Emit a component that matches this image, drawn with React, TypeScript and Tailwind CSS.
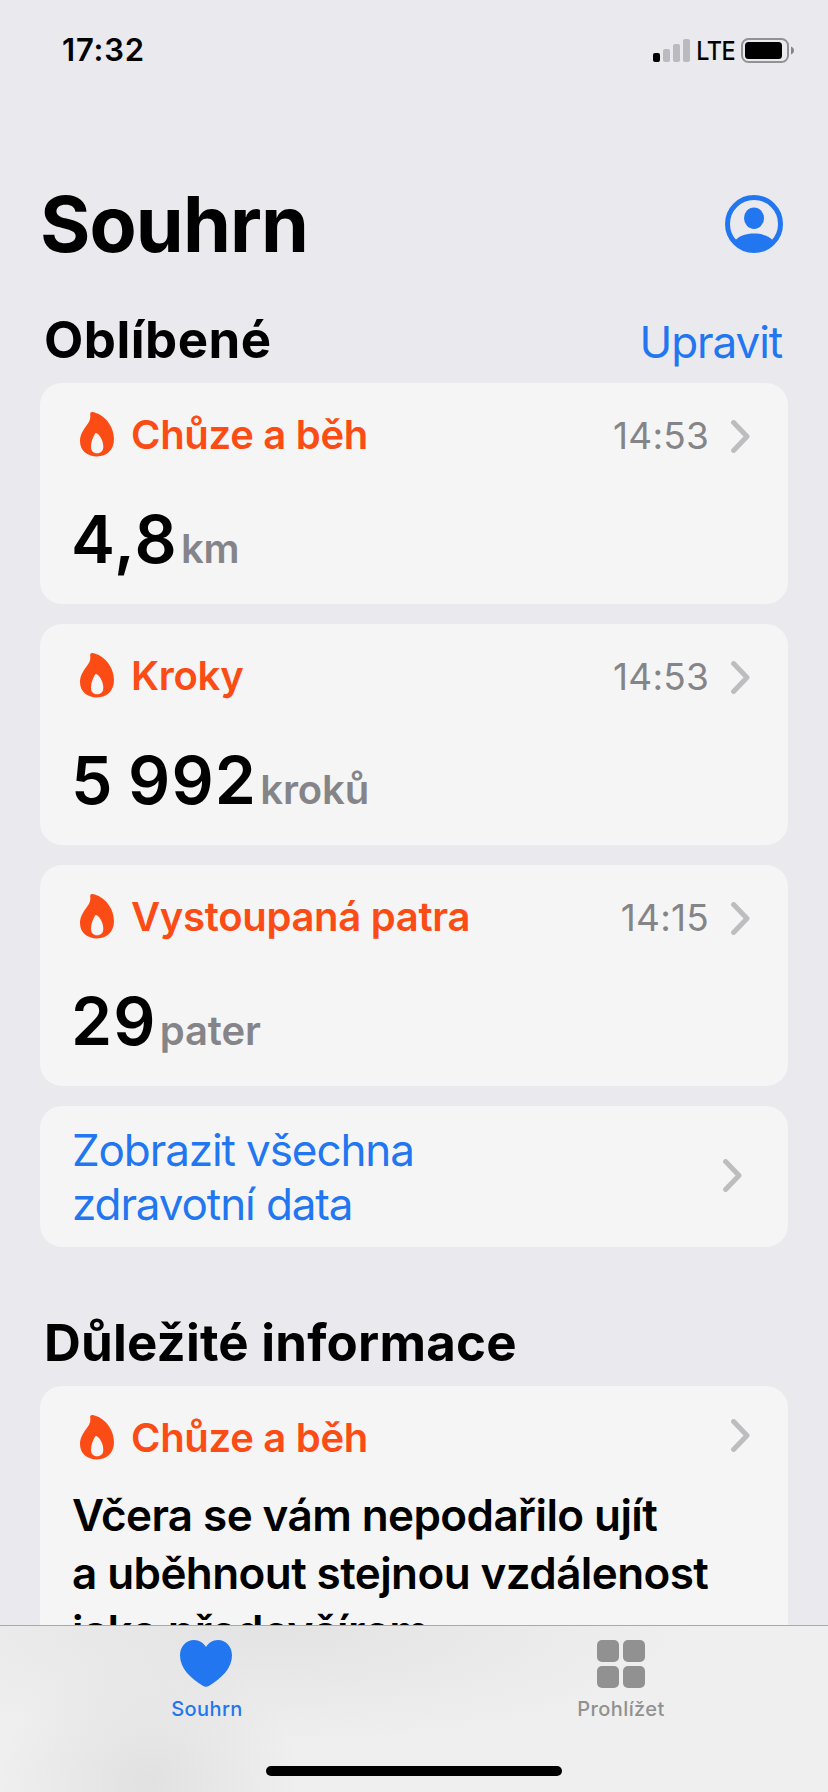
interface Metric {
  title: string;
  time: string;
  value: string;
  unit: string;
}

const METRICS: Metric[] = [
  { title: 'Chůze a běh', time: '14:53', value: '4,8', unit: 'km' },
  { title: 'Kroky', time: '14:53', value: '5 992', unit: 'kroků' },
  { title: 'Vystoupaná patra', time: '14:15', value: '29', unit: 'pater' },
];

function FlameIcon() {
  return (
    <svg width="34" height="45" viewBox="0 0 34 45" className="shrink-0">
      <path
        fill="#fc4c16"
        fillRule="evenodd"
        d="M12.5 .1C24 2 34 14 34 27c0 11-7 17.4-17 17.4S0 38.5 0 29c0-6 3-10.5 6-14.7 3-4.2 4.9-6.6 4.2-11.8C10 .8 11-.1 12.5 .1ZM16 21c-.5-.1-.8.2-1.2 1C13 25.5 11 29.500 11 34.500c0 4.500 2.300 6.800 6 6.800 4 0 6.300-2.300 6.300-6.800 0-5.500-3.300-11-6-13C16.800 21.200 16.500 21 16 21Z"
      />
    </svg>
  );
}

function ChevronIcon({ className = '' }: { className?: string }) {
  return (
    <svg width="19" height="33" viewBox="0 0 19 33" className={`shrink-0 ${className}`}>
      <path
        d="M2.6 2.6 16 16.5 2.6 30.4"
        fill="none"
        stroke="#bdbdbf"
        strokeWidth="5"
        strokeLinecap="round"
        strokeLinejoin="round"
      />
    </svg>
  );
}

function AvatarIcon() {
  return (
    <svg width="58" height="58" viewBox="0 0 58 58">
      <circle cx="29" cy="29" r="26.5" fill="none" stroke="#2277f0" strokeWidth="5" />
      <ellipse cx="29" cy="23.2" rx="10" ry="10.8" fill="#2277f0" />
      <path d="M10 45.5C14 41 21 38.5 29 38.5S44 41 48 45.5A26 26 0 0 1 10 45.5Z" fill="#2277f0" />
    </svg>
  );
}

function StatusBar() {
  return (
    <div className="h-[100px] shrink-0 flex items-center justify-between pl-[62px] pr-[34px]">
      <span className="text-[31px] font-semibold tracking-[0.8px]">17:32</span>
      <div className="flex items-center">
        <svg width="37" height="23" viewBox="0 0 37 23">
          <rect x="0" y="14" width="7" height="9" rx="2" fill="#000" />
          <rect x="10" y="10" width="7" height="13" rx="2" fill="#bbbabf" />
          <rect x="20" y="5" width="7" height="18" rx="2" fill="#bbbabf" />
          <rect x="30" y="0" width="7" height="23" rx="2" fill="#bbbabf" />
        </svg>
        <span className="w-[51px] flex justify-center text-[26px] font-medium tracking-[-0.5px]">
          <span className="scale-x-[0.9]">LTE</span>
        </span>
        <svg width="53" height="25" viewBox="0 0 53 25">
          <rect x="1" y="1" width="46" height="23" rx="6.5" fill="none" stroke="#919196" strokeWidth="2" />
          <rect x="4" y="4" width="37" height="17" rx="3.5" fill="#000" />
          <path d="M50 8.500c1.800.7 3 2.200 3 4s-1.200 3.300-3 4Z" fill="#86868a" />
        </svg>
      </div>
    </div>
  );
}

function MetricCard({ title, time, value, unit }: Metric) {
  return (
    <div className="h-[221px] rounded-[22px] bg-[#f5f5f5] pl-8 pr-[38px] pt-[29px]">
      <div className="h-[45px] flex items-center">
        <div className="pl-2">
          <FlameIcon />
        </div>
        <span className="ml-[17px] flex-1 text-[40px] leading-none font-semibold tracking-[-0.3px] text-[#fc4c16]">
          {title}
        </span>
        <span className="mt-[2px] mr-[22px] text-[37px] leading-none tracking-[0.2px] text-[#858589]">{time}</span>
        <ChevronIcon className="mt-1" />
      </div>
      <div className="mt-[42px] -ml-px flex items-baseline gap-[3px] leading-[80px]">
        <span className="text-[66px] font-semibold tracking-[1.2px] [word-spacing:-3.5px]">{value}</span>
        <span className="text-[40px] font-semibold tracking-[-0.1px] text-[#858589]">{unit}</span>
      </div>
    </div>
  );
}

function TabBar() {
  return (
    <nav className="h-[167px] shrink-0 border-t border-[#a9a9ac] bg-[#efefef] bg-[radial-gradient(ellipse_150px_130px_at_150px_155px,#e1e1e1,transparent),radial-gradient(ellipse_420px_120px_at_270px_0px,#e3e3e3,transparent)]">
      <div className="flex pt-[14px] text-[20px] leading-6 font-medium tracking-[0.4px]">
        <div className="flex-1 flex flex-col items-center text-[#2277f0]">
          <svg width="52" height="48" viewBox="0 0 52 48" className="mr-[2px]">
            <path
              fill="currentColor"
              d="M26 7C28.5 3 32.5 0 38 0c8 0 14 6.5 14 15.5C52 28 41.5 38.5 28.8 46c-1.800 1-3.800 1-5.600 0C10.5 38.5 0 28 0 15.5 0 6.5 6 0 14 0c5.500 0 9.500 3 12 7Z"
            />
          </svg>
          <span className="mt-[9px]">Souhrn</span>
        </div>
        <div className="flex-1 flex flex-col items-center text-[#919191]">
          <div className="grid grid-cols-2 gap-1">
            <div className="size-[22px] rounded-[5px] bg-[#919191]" />
            <div className="size-[22px] rounded-[5px] bg-[#919191]" />
            <div className="size-[22px] rounded-[5px] bg-[#919191]" />
            <div className="size-[22px] rounded-[5px] bg-[#919191]" />
          </div>
          <span className="mt-[9px]">Prohlížet</span>
        </div>
      </div>
      <div className="mt-[45px] mx-auto w-[296px] h-[10px] rounded-full bg-black" />
    </nav>
  );
}

export default function App() {
  return (
    <div className="w-[828px] h-[1792px] overflow-hidden flex flex-col bg-[#eae9ee] text-black font-['Inter','Liberation_Sans',sans-serif]">
      <StatusBar />

      <main className="flex-1 min-h-0 overflow-hidden px-10 pt-[90px]">
        <div className="h-[68px] flex items-center justify-between pr-[5px]">
          <h1 className="text-[77px] leading-none font-bold tracking-[-0.9px]">Souhrn</h1>
          <AvatarIcon />
        </div>

        <div className="mt-[52px] h-[73px] pl-1 pr-[6px] flex items-baseline justify-between leading-[60px]">
          <h2 className="text-[51px] font-bold tracking-[0.5px]">Oblíbené</h2>
          <span className="text-[44px] tracking-[-1.1px] text-[#2277f0]">Upravit</span>
        </div>

        <div className="space-y-5">
          {METRICS.map((metric) => (
            <MetricCard key={metric.title} {...metric} />
          ))}

          <div className="h-[141px] rounded-[22px] bg-[#f5f5f5] pl-8 pr-[46px] flex items-center justify-between">
            <p className="text-[44px] leading-[54px] tracking-[-1.1px] text-[#2277f0]">
              Zobrazit všechna
              <br />
              zdravotní data
            </p>
            <ChevronIcon className="mb-[2px]" />
          </div>
        </div>

        <h2 className="mt-[66px] pb-[13px] pl-1 text-[51px] leading-[60px] font-bold tracking-[0.2px]">
          Důležité informace
        </h2>

        <div className="rounded-[22px] bg-[#f5f5f5] pl-8 pr-[38px] pt-[29px] pb-8">
          <div className="h-[45px] flex items-center">
            <div className="pl-2">
              <FlameIcon />
            </div>
            <span className="ml-[17px] flex-1 text-[40px] leading-none font-semibold tracking-[-0.3px] text-[#fc4c16]">
              Chůze a běh
            </span>
            <ChevronIcon className="mb-1" />
          </div>
          <p className="mt-[26px] text-[44px] leading-[58px] font-semibold tracking-[-0.58px] whitespace-nowrap">
            Včera se vám nepodařilo ujít
            <br />
            a uběhnout stejnou vzdálenost
            <br />
            jako předevčírem
          </p>
        </div>
      </main>

      <TabBar />
    </div>
  );
}
